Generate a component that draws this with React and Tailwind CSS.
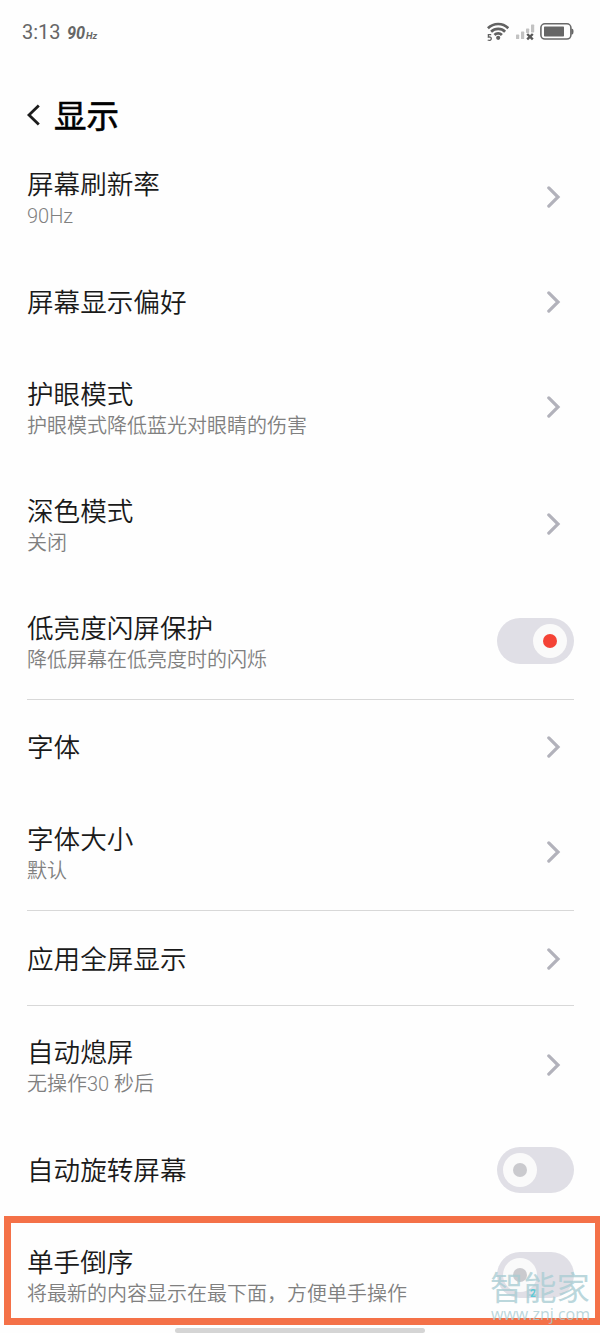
import React, { useState } from 'react';

const sections = [
  [
    { id: 'refresh', title: '屏幕刷新率', desc: '90Hz' },
    { id: 'preference', title: '屏幕显示偏好' },
    { id: 'eye', title: '护眼模式', desc: '护眼模式降低蓝光对眼睛的伤害' },
    { id: 'dark', title: '深色模式', desc: '关闭' },
    { id: 'flicker', title: '低亮度闪屏保护', desc: '降低屏幕在低亮度时的闪烁', toggle: true },
  ],
  [
    { id: 'font', title: '字体' },
    { id: 'fontSize', title: '字体大小', desc: '默认' },
  ],
  [{ id: 'fullscreen', title: '应用全屏显示' }],
  [
    { id: 'sleep', title: '自动熄屏', desc: '无操作30 秒后' },
    { id: 'rotate', title: '自动旋转屏幕', toggle: true },
    { id: 'reverse', title: '单手倒序', desc: '将最新的内容显示在最下面，方便单手操作', toggle: true },
  ],
];

const Chevron = () => (
  <svg className="mr-[12.6px] h-[22px] w-[14px]" viewBox="0 0 14 22" fill="none">
    <path d="M1.8 1.9L11 11L1.8 20.1" stroke="#b2b2bb" strokeWidth="3.2" strokeLinecap="round" />
  </svg>
);

const Toggle = ({ on, onClick }) => (
  <button
    type="button"
    onClick={onClick}
    className={`flex h-[46px] w-[76.6px] items-center rounded-full bg-[#e0dfe6] px-[6.4px] ${on ? 'justify-end' : 'justify-start'}`}
  >
    <span className="flex size-[34px] items-center justify-center rounded-full bg-[#fafafa]">
      <span className={`size-[14px] rounded-full ${on ? 'bg-[#f44336]' : 'bg-[#cacace]'}`} />
    </span>
  </button>
);

const StatusBar = () => (
  <div className="flex h-[64px] items-center justify-between pr-[26px] pl-[22px] text-[#666]">
    <div className="flex items-baseline">
      <span className="text-[20px] leading-[24px] font-normal">3:13</span>
      <span className="ml-[6.5px] inline-block w-[19px] origin-left scale-x-[.86] text-[19px] leading-[24px] font-bold italic">90</span>
      <span className="text-[9.5px] font-bold italic">Hz</span>
    </div>
    <div className="flex items-center">
      <svg className="h-[20px] w-[22px]" viewBox="0 0 22 20" fill="none">
        <g stroke="#626262" strokeWidth="2.7">
          <path d="M.9 6.2C6.7 .6 15.7 .6 21.3 6.2" />
          <path d="M4.1 9.8C8.1 6 14.3 6 18.1 9.8" />
          <path d="M7.5 13C9.5 10.9 12.9 10.9 14.9 13" />
        </g>
        <circle cx="11.2" cy="15.8" r="2.1" fill="#626262" />
        <path d="M4.2 12.7H1.4V15.2C3.4 14.6 4.3 15.6 4.3 16.8C4.3 18.4 2.4 18.8 .7 18" stroke="#626262" strokeWidth="1.3" />
      </svg>
      <svg className="ml-[7px] h-[18px] w-[20px]" viewBox="0 0 20 18">
        <g fill="#c2c2c2">
          <rect x="0" y="11.5" width="3.2" height="4.6" rx=".7" />
          <rect x="5" y="8.5" width="3.2" height="7.6" rx=".7" />
          <rect x="10" y="5.5" width="3.2" height="4.5" rx=".7" />
          <rect x="15" y="1.5" width="3.2" height="8" rx=".7" />
        </g>
        <path d="M11.2 11L16.8 16.4M16.8 11L11.2 16.4" stroke="#595959" strokeWidth="2.4" />
      </svg>
      <svg className="ml-[4px] h-[18px] w-[34px]" viewBox="0 0 34 18">
        <rect x=".9" y=".8" width="30" height="15.2" rx="4" fill="none" stroke="#696969" strokeWidth="1.6" />
        <rect x="4" y="3.6" width="20" height="9.8" rx=".7" fill="#666" />
        <path d="M31.3 5.8H32C33 5.8 33.5 6.8 33.5 8.6S33 11.5 32 11.5H31.3Z" fill="#666" />
      </svg>
    </div>
  </div>
);

const Row = ({ item, on, onToggle }) => (
  <div className={`flex items-center justify-between ${item.desc ? 'h-[116.66px]' : 'h-[93.34px]'}`}>
    <div className="pt-[.9px]">
      <p className="text-[26.6px] leading-[37px] text-[#1a1a1a]">{item.title}</p>
      {item.desc && <p className="text-[20px] leading-[26px] text-[#808080]">{item.desc}</p>}
    </div>
    {item.toggle ? <Toggle on={on} onClick={onToggle} /> : <Chevron />}
  </div>
);

export default function App() {
  const [enabled, setEnabled] = useState({ flicker: true });

  const toggle = (id) => setEnabled((prev) => ({ ...prev, [id]: !prev[id] }));

  return (
    <div className="relative h-[1333px] w-[600px] overflow-hidden bg-[#fefefe] font-[Roboto,'Noto_Sans_CJK_SC',sans-serif] font-[350]">
      <StatusBar />
      <header className="flex h-[75px] items-center pt-[26px] pl-[26px]">
        <svg className="h-[22px] w-[15px]" viewBox="0 0 15 22" fill="none">
          <path d="M12.8 1.5L3 11L12.8 20.5" stroke="#1c1c1c" strokeWidth="2.8" />
        </svg>
        <h1 className="ml-[13px] pt-[4px] text-[32.5px] leading-[40px] font-normal text-black [-webkit-text-stroke:0.6px_black]">显示</h1>
      </header>

      <main className="pr-[26.4px] pl-[27px]">
        {sections.map((items, i) => (
          <section key={i} className={i > 0 ? 'border-t border-[#d8d8d8] pt-[.5px]' : ''}>
            {items.map((item) => (
              <Row key={item.id} item={item} on={!!enabled[item.id]} onToggle={() => toggle(item.id)} />
            ))}
          </section>
        ))}
      </main>

      {/* gesture bar */}
      <div className="absolute top-[1328px] left-[175px] h-[5px] w-[250px] rounded-full bg-[#d5d5d5]" />

      {/* highlight around the last row */}
      <div className="pointer-events-none absolute top-[1216px] left-[4px] h-[109px] w-[598px] border-[7px] border-[#f47148]" />

      {/* watermark */}
      <div className="pointer-events-none absolute top-[1272px] left-[490px] w-[101px] text-[#a9cdd3]/80">
        <p className="text-[33.3px] leading-[34px] font-normal whitespace-nowrap">智能家</p>
        <p className="-mt-px pl-px font-['Open_Sans'] text-[16px] leading-[18px] font-normal whitespace-nowrap">www.znj.com</p>
        <span className="absolute top-[17px] left-[40px] text-[10px] leading-[10px] font-bold text-[#5cc9d6]">2</span>
      </div>
    </div>
  );
}
